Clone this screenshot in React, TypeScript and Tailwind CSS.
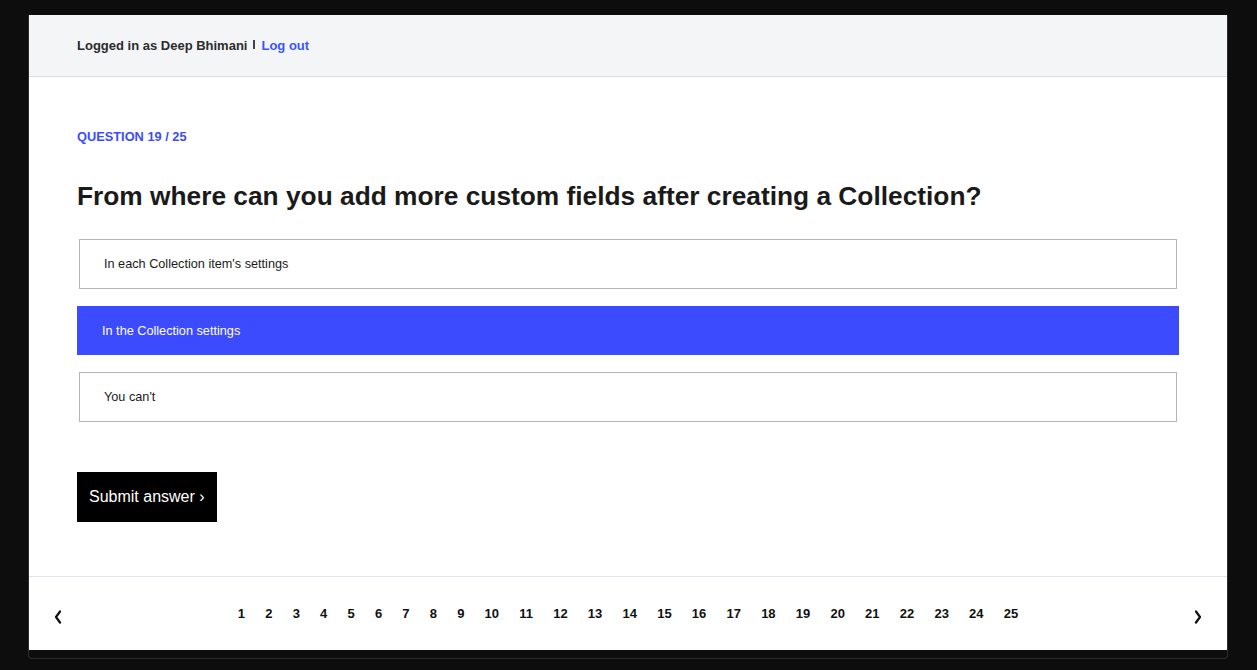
import React, { useState } from 'react';

const options = [
  "In each Collection item's settings",
  'In the Collection settings',
  "You can't",
];

const ChevronIcon: React.FC<{ dir: 'left' | 'right' }> = ({ dir }) => (
  <svg width="8" height="14" viewBox="0 0 8 14" fill="none">
    <path
      d={dir === 'left' ? 'M6 1.5 L2 7 L6 12.5' : 'M2 1.5 L6 7 L2 12.5'}
      stroke="#111"
      strokeWidth={2.2}
      strokeLinecap="round"
      strokeLinejoin="round"
    />
  </svg>
);

const App: React.FC = () => {
  const [selected, setSelected] = useState(1);
  const pages = Array.from({ length: 25 }, (_, i) => i + 1);

  return (
    <div className="w-full h-[670px] bg-[#0d0d0d] pt-[15px] font-['Liberation_Sans',Arial,sans-serif]">
      <div className="ml-[28px] w-[1200px] border border-t-0 border-[#2c2c2c] rounded-b-[4px] pb-[8px]">
        <div className="bg-white">
          {/* header */}
          <div className="h-[62px] bg-[#f4f5f7] border-b border-[#d9dce0] flex items-center pl-[48px] text-[13px] font-bold leading-none">
            <span className="text-[#2b2b2b]">Logged in as Deep Bhimani</span>
            <span className="mx-[6px] w-[2px] h-[9px] bg-[#444] -mt-[3px]"></span>
            <a className="text-[#3b55ff] cursor-pointer">Log out</a>
          </div>

          {/* question */}
          <div className="px-[48px] pt-[52px] pb-[54px] border-b border-[#dfe5ec]">
            <div className="text-[12.8px] leading-[16px] font-bold text-[#3b4bff]">QUESTION 19 / 25</div>
            <h1 className="mt-[35px] text-[26.3px] leading-[32px] font-bold text-[#1a1a1a]">
              From where can you add more custom fields after creating a Collection?
            </h1>

            <div className="mt-[27px] flex flex-col">
              {options.map((opt, i) =>
                i === selected ? (
                  <button
                    key={opt}
                    onClick={() => setSelected(i)}
                    className="mt-[17px] h-[49px] pt-[2px] bg-[#3d4bff] text-white text-[12.7px] text-left pl-[25px]"
                  >
                    {opt}
                  </button>
                ) : (
                  <button
                    key={opt}
                    onClick={() => setSelected(i)}
                    className={`${i === 0 ? '' : 'mt-[17px]'} mx-[2px] h-[50px] pt-[2px] border border-[#b5b5b5] bg-white text-[#1a1a1a] text-[12.7px] text-left pl-[24px]`}
                  >
                    {opt}
                  </button>
                )
              )}
            </div>

            <button className="mt-[50px] w-[140px] h-[50px] bg-black text-white text-[16px] text-left pl-[12px]">
              Submit answer ›
            </button>
          </div>

          {/* pagination */}
          <div className="h-[73px] relative flex items-center justify-center">
            <div className="absolute left-[25px] top-[33px]">
              <ChevronIcon dir="left" />
            </div>
            <div className="flex text-[13px] font-bold text-[#111]">
              {pages.map((p) => (
                <span key={p} className="px-[10.1px] cursor-pointer">{p}</span>
              ))}
            </div>
            <div className="absolute right-[25px] top-[33px]">
              <ChevronIcon dir="right" />
            </div>
          </div>
        </div>
      </div>
    </div>
  );
};

export default App;
